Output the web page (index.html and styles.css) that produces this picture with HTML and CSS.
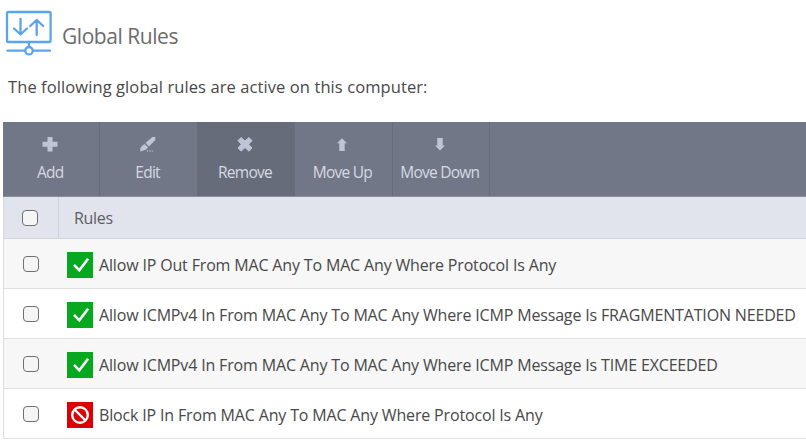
FILE: index.html
```html
<!DOCTYPE html>
<html lang="en">
<head>
    <meta charset="UTF-8">
    <meta name="viewport" content="width=device-width, initial-scale=1.0">
    <title>Global Rules</title>
    <link rel="stylesheet" href="styles.css">
</head>
<body>
    <header class="page-header">
        <svg class="header-icon" width="48" height="46" viewBox="0 0 48 46">
            <rect x="2" y="2" width="43.600" height="30" rx="1.500"/>
            <path d="M15.500 9v15.500M9 18.500l6.500 6 6.500-6M31.700 25V10M25.200 16l6.500-6 6.500 6"/>
            <path d="M24 32v5M2.500 40.700H20M28 40.700h17"/>
            <circle cx="24" cy="40.700" r="3.700"/>
        </svg>
        <h1>Global Rules</h1>
    </header>
    <p class="intro">The following global rules are active on this computer:</p>

    <div class="panel">
        <div class="toolbar">
            <button class="tool">
                <svg width="18" height="18" viewBox="0 0 18 18"><path d="M6.500 2h5v4.800H16.500v5H11.500V16.500h-5V11.800H1.500v-5h5z"/></svg>
                <span>Add</span>
            </button>
            <button class="tool">
                <svg width="18" height="18" viewBox="0 0 18 18"><path d="M13.300 2h3v3l-6.300 6.500-3.500-3.500zM5.500 9l3.500 3.300q-.5 1.200-2.200 2.400L1.300 16.500v-3.200Q3 10.500 5.500 9z"/><path d="M8 15.400h1.300v1.200H8zM10.300 15.400h1.300v1.200h-1.300zM12.600 15.400h1.300v1.200h-1.300z"/></svg>
                <span>Edit</span>
            </button>
            <button class="tool active">
                <svg width="18" height="18" viewBox="0 0 18 18"><path d="M5 2.500L9 6l4-3.500L16 5.700 12.700 9.300 16 13l-3 3.200-4-3.600-4 3.600L2 13l3.300-3.700L2 5.700z" stroke="#bfc4d6" stroke-linejoin="round"/></svg>
                <span>Remove</span>
            </button>
            <button class="tool">
                <svg width="18" height="18" viewBox="0 0 18 18"><path d="M9 3.200l5 5h-2.300v7.800h-5.400V8.200H4z"/></svg>
                <span>Move Up</span>
            </button>
            <button class="tool">
                <svg width="18" height="18" viewBox="0 0 18 18"><path d="M6.300 3h5.400v7.500H14l-5 5-5-5h2.300z"/></svg>
                <span>Move Down</span>
            </button>
        </div>

        <div class="table-head">
            <div class="check-cell"><input type="checkbox"></div>
            <div class="head-title">Rules</div>
        </div>
        <div class="rule">
            <input type="checkbox">
            <svg class="status allow" width="26" height="26" viewBox="0 0 26 26"><path d="M7 12.800l5.300 5.500 8.800-11.500"/></svg>
            <span>Allow IP Out From MAC Any To MAC Any Where Protocol Is Any</span>
        </div>
        <div class="rule">
            <input type="checkbox">
            <svg class="status allow" width="26" height="26" viewBox="0 0 26 26"><path d="M7 12.800l5.300 5.500 8.800-11.500"/></svg>
            <span>Allow ICMPv4 In From MAC Any To MAC Any Where ICMP Message Is FRAGMENTATION NEEDED</span>
        </div>
        <div class="rule">
            <input type="checkbox">
            <svg class="status allow" width="26" height="26" viewBox="0 0 26 26"><path d="M7 12.800l5.300 5.500 8.800-11.500"/></svg>
            <span>Allow ICMPv4 In From MAC Any To MAC Any Where ICMP Message Is TIME EXCEEDED</span>
        </div>
        <div class="rule">
            <input type="checkbox">
            <svg class="status block" width="26" height="26" viewBox="0 0 26 26"><circle cx="13" cy="13" r="7.800"/><path d="M7.500 7.500l11 11"/></svg>
            <span>Block IP In From MAC Any To MAC Any Where Protocol Is Any</span>
        </div>
    </div>
</body>
</html>
```
FILE: styles.css
```css
* {
    box-sizing: border-box;
}

body {
    margin: 0;
    height: 448px;
    overflow: hidden;
    background-color: #fff;
    color: #484848;
    font-family: "Open Sans", "Noto Sans", sans-serif;
    font-size: 16px;
    white-space: nowrap;
}

.page-header {
    display: flex;
    height: 68px;
    padding: 10px 0 0 5px;
}

.header-icon {
    fill: none;
    stroke: #5aa5ea;
    stroke-width: 2.3;
    stroke-linecap: round;
    stroke-linejoin: round;
}

h1 {
    margin: 11px 0 0 9px;
    font-size: 21px;
    font-weight: 400;
    line-height: 30px;
    letter-spacing: -0.45px;
    color: #6c6c6c;
}

.intro {
    margin: 8px 0 0 8px;
    height: 46px;
    font-size: 16.5px;
    line-height: 22px;
    letter-spacing: 0.09px;
}

.panel {
    margin-left: 3px;
}

.toolbar {
    display: flex;
    height: 75px;
    background-color: #727787;
    border-bottom: 1px solid #8d8f96;
}

.tool {
    display: flex;
    flex-direction: column;
    align-items: center;
    width: 97.4px;
    padding: 13px 2px 0 0;
    border: none;
    border-right: 1px solid #686d7c;
    background: none;
    color: #d6d9e2;
    font-family: inherit;
    font-size: 15.5px;
    line-height: 20px;
    letter-spacing: -0.75px;
}

.tool svg {
    margin-bottom: 9px;
    fill: #bfc4d6;
}

.tool.active {
    background-color: #676c7b;
}

.table-head {
    display: flex;
    height: 42px;
    background-color: #e1e4ed;
    border-left: 1px solid #d8d8dc;
    border-bottom: 1px solid #d3d4da;
    color: #5c5e63;
}

.check-cell {
    display: flex;
    align-items: center;
    width: 55px;
    padding: 1px 0 0 18px;
    border-right: 1px solid #d0d1d6;
}

.head-title {
    padding-left: 15px;
    line-height: 43px;
    letter-spacing: -0.3px;
}

input {
    appearance: none;
    flex: none;
    width: 16px;
    height: 16px;
    margin: 0;
    border: 1px solid #6f6f6f;
    border-radius: 4px;
    background-color: #f5f5f5;
}

.rule {
    display: flex;
    align-items: center;
    height: 50px;
    padding-left: 19px;
    border-left: 1px solid #ddd;
    border-bottom: 1px solid #e0e0e0;
}

.rule:nth-child(odd) {
    background-color: #f7f7f7;
}

.status {
    flex: none;
    margin: 2px 6px 0 28px;
    fill: none;
    stroke: #fff;
}

.allow {
    background-color: #05a81e;
    stroke-width: 2.6;
}

.block {
    background-color: #dc0000;
    stroke-width: 2.4;
}

.rule span {
    padding-top: 2px;
    letter-spacing: -0.16px;
}
```
